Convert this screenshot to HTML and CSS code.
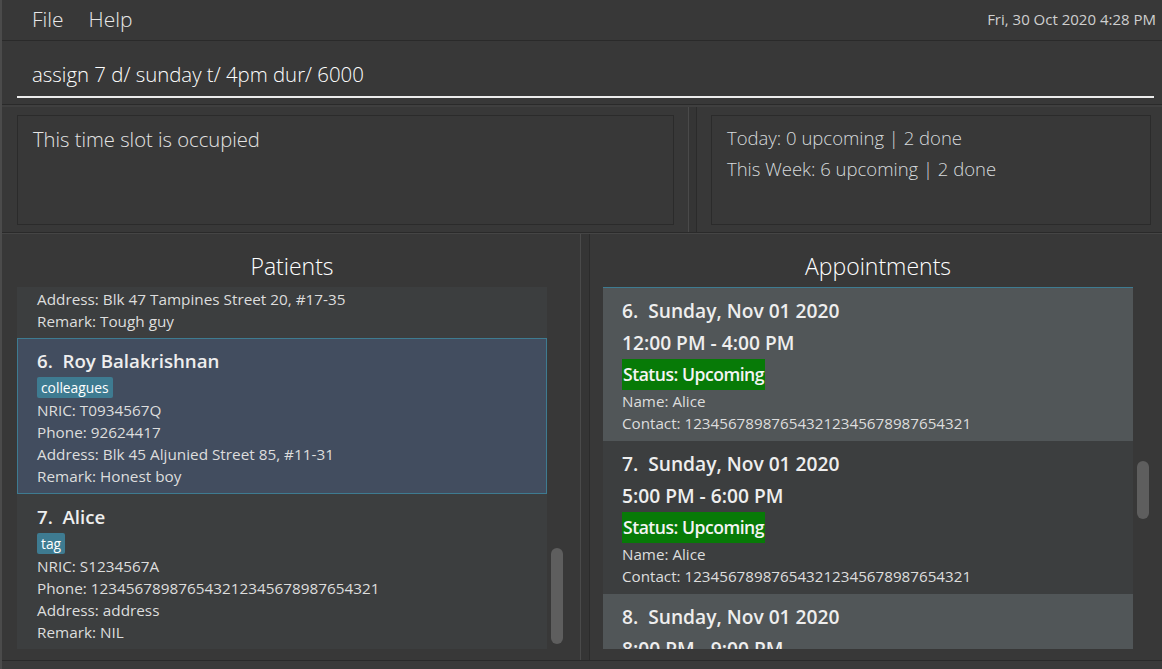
FILE: index.html
```html
<!DOCTYPE html>
<html>
<head>
<meta charset="utf-8">
<title>Clinic</title>
<link rel="stylesheet" href="styles.css">
</head>
<body>
<div class="window">
  <div class="menubar">
    <div class="menus"><span class="menu">File</span><span class="menu">Help</span></div>
    <div class="clock">Fri, 30 Oct 2020 4:28 PM</div>
  </div>
  <div class="command-pane">
    <div class="command-field">assign 7 d/ sunday t/ 4pm dur/ 6000</div>
  </div>
  <div class="top-row">
    <div class="result-pane">
      <div class="result-box">This time slot is occupied</div>
    </div>
    <div class="vdivider"></div>
    <div class="stats-pane">
      <div class="stats-box">
        <div class="stats-line">Today: 0 upcoming | 2 done</div>
        <div class="stats-line">This Week: 6 upcoming | 2 done</div>
      </div>
    </div>
  </div>
  <div class="bottom-row">
    <section class="list-pane patients-pane">
      <h2 class="pane-header">Patients</h2>
      <div class="list-wrap">
        <div class="list">
          <div class="cell even partial">
            <div class="small">Address: Blk 47 Tampines Street 20, #17-35</div>
            <div class="small">Remark: Tough guy</div>
          </div>
          <div class="cell selected">
            <div class="big">6.&nbsp; Roy Balakrishnan</div>
            <div class="tags"><span class="tag">colleagues</span></div>
            <div class="small">NRIC: T0934567Q</div>
            <div class="small">Phone: 92624417</div>
            <div class="small">Address: Blk 45 Aljunied Street 85, #11-31</div>
            <div class="small">Remark: Honest boy</div>
          </div>
          <div class="cell even">
            <div class="big">7.&nbsp; Alice</div>
            <div class="tags"><span class="tag">tag</span></div>
            <div class="small">NRIC: S1234567A</div>
            <div class="small">Phone: 123456789876543212345678987654321</div>
            <div class="small">Address: address</div>
            <div class="small">Remark: NIL</div>
          </div>
        </div>
        <div class="scrollbar"><div class="thumb" style="margin-top:261px;height:96px"></div></div>
      </div>
    </section>
    <div class="vdivider low"></div>
    <section class="list-pane appt-pane">
      <h2 class="pane-header">Appointments</h2>
      <div class="list-wrap">
        <div class="list focused">
          <div class="appt odd">
            <div class="big">6.&nbsp; Sunday, Nov 01 2020</div>
            <div class="big time">12:00 PM - 4:00 PM</div>
            <div class="status"><span class="status-label">Status: Upcoming</span></div>
            <div class="small">Name: Alice</div>
            <div class="small">Contact: 123456789876543212345678987654321</div>
          </div>
          <div class="appt even">
            <div class="big">7.&nbsp; Sunday, Nov 01 2020</div>
            <div class="big time">5:00 PM - 6:00 PM</div>
            <div class="status"><span class="status-label">Status: Upcoming</span></div>
            <div class="small">Name: Alice</div>
            <div class="small">Contact: 123456789876543212345678987654321</div>
          </div>
          <div class="appt odd">
            <div class="big">8.&nbsp; Sunday, Nov 01 2020</div>
            <div class="big time">8:00 PM - 9:00 PM</div>
            <div class="status"><span class="status-label">Status: Upcoming</span></div>
            <div class="small">Name: Alice</div>
            <div class="small">Contact: 123456789876543212345678987654321</div>
          </div>
        </div>
        <div class="scrollbar"><div class="thumb" style="margin-top:174px;height:58px"></div></div>
      </div>
    </section>
  </div>
  <div class="footer"></div>
</div>
</body>
</html>
```

FILE: styles.css
```css
* { box-sizing: border-box; }
html, body { margin: 0; padding: 0; }
body {
  background: #383838;
  font-family: "Open Sans", "Noto Sans", "Liberation Sans", sans-serif;
  color: #e6e6e6;
  width: 1162px;
  height: 669px;
  overflow: hidden;
}
.window {
  display: flex;
  flex-direction: column;
  height: 669px;
  border-left: 2px solid #4b4b4b;
  background: #383838;
}
.menubar {
  height: 41px;
  display: flex;
  justify-content: space-between;
  align-items: flex-start;
  border-bottom: 1px solid #2a2a2a;
  padding: 0 6px 0 30px;
}
.menus { display: flex; gap: 25px; padding-top: 5px; }
.menu { font-size: 21px; font-weight: 300; color: #e8e8e8; line-height: 28px; }
.clock { font-size: 15px; color: #cfcfcf; padding-top: 9px; line-height: 20px; }

.command-pane {
  height: 64px;
  padding: 21px 8px 0 15px;
  border-bottom: 1px solid #2a2a2a;
}
.command-field {
  font-size: 20.4px;
  font-weight: 300;
  color: #ffffff;
  line-height: 24px;
  padding: 0 0 10px 15px;
  border-bottom: 2px solid #ececec;
}

.top-row {
  display: flex;
  height: 128px;
  border-top: 2px solid #3f3f3f;
  border-bottom: 1px solid #2a2a2a;
}
.result-pane { width: 686px; padding: 8px 14px 7px 15px; }
.result-box {
  height: 100%;
  border: 1px solid #2b2b2b;
  padding: 9px 15px;
  font-size: 20.2px;
  font-weight: 300;
  line-height: 28px;
  color: #e4e4e4;
}
.vdivider {
  width: 9px;
  border-left: 1px solid #4a4a4a;
  border-right: 1px solid #2b2b2b;
  background: #353535;
}
.stats-pane { flex: 1; padding: 8px 11px 7px 14px; }
.stats-box {
  height: 100%;
  border: 1px solid #2b2b2b;
  padding: 6px 15px;
}
.stats-line { font-size: 18.5px; line-height: 31px; color: #d6dadc; font-weight: 300; }

.bottom-row {
  display: flex;
  flex: 1;
  border-top: 1px solid #454545;
}
.vdivider.low { width: 10px; }
.list-pane { display: flex; flex-direction: column; padding-bottom: 10px; }
.patients-pane { width: 578px; padding-left: 15px; padding-right: 13px; }
.appt-pane { flex: 1; padding-left: 13px; padding-right: 9px; }
.pane-header {
  margin: 0;
  padding-top: 17px;
  height: 53px;
  text-align: center;
  font-size: 23px;
  font-weight: 300;
  line-height: 30px;
  color: #ffffff;
}
.list-wrap { display: flex; height: 362px; }
.list { flex: 1; overflow: hidden; background: #3c3e3f; }
.list.focused { border-top: 1px solid #3e7b91; }
.scrollbar { width: 20px; padding-left: 4px; }
.thumb { width: 12px; border-radius: 6px; background: #5e5e5e; }

.cell { padding: 10px 18px 6px 19px; border: 1px solid transparent; }
.cell.partial { padding-top: 0; height: 51px; }
.even { background: #3c3e3f; }
.odd { background: #515658; }
.selected { background: #424d5f; border-color: #3e7b91; }
.big {
  font-size: 18.7px;
  font-weight: 600;
  line-height: 24px;
  color: #eeeeee;
}
.small { font-size: 15.3px; line-height: 22px; color: #dddddd; }
.tags { display: flex; margin-top: 4px; height: 21px; margin-bottom: 1px; }
.tag {
  background: #3e7b91;
  color: #ffffff;
  font-size: 13.8px;
  line-height: 21px;
  padding: 0 4px;
  border-radius: 2px;
}

.appt { padding: 10px 18px 6px 19px; height: 153px; }
.appt .big { line-height: 26px; font-size: 19.2px; }
.appt .time { margin-top: 6px; }
.status { margin-top: 3px; height: 31px; display: flex; }
.status-label {
  background: #077a07;
  color: #f4f4f4;
  font-size: 17.6px;
  font-weight: 600;
  letter-spacing: -0.5px;
  line-height: 31px;
  padding: 0 1px;
}
.appt .small { font-size: 15.2px; }

.footer { height: 9px; border-top: 1px solid #2a2a2a; background: #3a3a3a; }
```
